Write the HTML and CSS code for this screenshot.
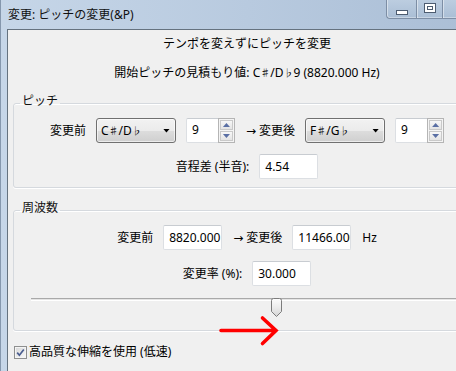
FILE: index.html
```html
<!DOCTYPE html>
<html lang="ja">
<head>
  <meta charset="utf-8">
  <link rel="stylesheet" href="styles.css">
</head>
<body>
  <div class="window">
    <div class="titlebar">
      <span class="title">変更: ピッチの変更(&amp;P)</span>
      <div class="caption">
        <span class="cap-btn cap-min"><span class="min-icon"></span></span>
        <span class="cap-btn cap-max"><span class="max-icon"></span></span>
        <span class="cap-btn cap-close"></span>
      </div>
    </div>

    <div class="client">
      <p class="info first">テンポを変えずにピッチを変更</p>
      <p class="info second">開始ピッチの見積もり値: C<span class="acc">♯</span>/D<span class="acc">♭</span>9 (8820.000 Hz)</p>

      <fieldset class="group">
        <legend>ピッチ</legend>
        <div class="row">
          <span class="lbl">変更前</span>
          <div class="combo"><span>C<span class="acc">♯</span>/D<span class="acc">♭</span></span><span class="caret"></span></div>
          <div class="spin">
            <span class="spin-val">9</span>
            <span class="spin-btns"><span class="sb up"></span><span class="sb down"></span></span>
          </div>
          <span class="lbl to">→ 変更後</span>
          <div class="combo"><span>F<span class="acc">♯</span>/G<span class="acc">♭</span></span><span class="caret"></span></div>
          <div class="spin">
            <span class="spin-val">9</span>
            <span class="spin-btns"><span class="sb up"></span><span class="sb down"></span></span>
          </div>
        </div>
        <div class="row">
          <span class="lbl">音程差 (半音):</span>
          <input class="field" type="text" value="4.54">
        </div>
      </fieldset>

      <fieldset class="group freq">
        <legend>周波数</legend>
        <div class="row">
          <span class="lbl">変更前</span>
          <input class="field" type="text" value="8820.000">
          <span class="lbl to">→ 変更後</span>
          <input class="field" type="text" value="11466.000">
          <span class="lbl hz">Hz</span>
        </div>
        <div class="row">
          <span class="lbl">変更率 (%):</span>
          <input class="field" type="text" value="30.000">
        </div>
        <div class="slider">
          <div class="track"></div>
          <svg class="thumb" width="11" height="19" viewBox="0 0 11 19">
            <defs>
              <linearGradient id="tg" x1="0" y1="0" x2="0" y2="1">
                <stop offset="0" stop-color="#fdfdfd"/>
                <stop offset="0.5" stop-color="#ececec"/>
                <stop offset="1" stop-color="#d4d4d4"/>
              </linearGradient>
            </defs>
            <path d="M0.5 2.5 Q0.5 0.5 2.5 0.5 H8.5 Q10.5 0.5 10.5 2.5 V13.5 L5.5 18.5 L0.5 13.5 Z" fill="url(#tg)" stroke="#7c7c7c"/>
          </svg>
        </div>
      </fieldset>

      <label class="check">
        <svg class="box" width="13" height="13" viewBox="0 0 13 13">
          <defs>
            <linearGradient id="cg" x1="0" y1="0" x2="1" y2="1">
              <stop offset="0" stop-color="#d9dadb"/>
              <stop offset="1" stop-color="#f6f6f6"/>
            </linearGradient>
          </defs>
          <rect x="0.5" y="0.5" width="12" height="12" fill="#f4f4f4" stroke="#8e8f8f"/>
          <rect x="2" y="2" width="9" height="9" fill="url(#cg)"/>
          <path d="M3.2 6.6 L5.4 9.2 L9.8 3.4" fill="none" stroke="#4a5d8f" stroke-width="1.7"/>
        </svg>
        <span>高品質な伸縮を使用 (低速)</span>
      </label>
    </div>
  </div>

  <svg class="red-arrow" width="456" height="371" viewBox="0 0 456 371">
    <path d="M221 330.5 H275 M262.5 318 L276 330.5 L262.5 343.5" fill="none" stroke="#ff0000" stroke-width="3.6" stroke-linecap="round" stroke-linejoin="miter"/>
  </svg>
</body>
</html>
```

FILE: styles.css
```css
* {
  box-sizing: border-box;
}
body {
  margin: 0;
  width: 456px;
  height: 371px;
  overflow: hidden;
  position: relative;
  font-family: "Noto Sans", "DejaVu Sans", "Noto Sans CJK JP", sans-serif;
  font-size: 12px;
  color: #000;
  background: #f0f0f0;
}
.acc {
  font-family: "Noto Sans CJK JP", sans-serif;
  font-size: 10px;
}
.window {
  width: 495px;
  height: 371px;
  display: flex;
  flex-direction: column;
  background: linear-gradient(to right, #c6d6e8 0%, #b8cadf 50%, #a9bdd5 100%);
  border-left: 1px solid #8597ad;
  padding: 0 8px 0 6px;
}
.titlebar {
  height: 29px;
  display: flex;
  align-items: flex-start;
}
.title {
  line-height: 16px;
  padding: 7px 0 0 1px;
  color: #111;
}
.caption {
  margin-left: auto;
  display: flex;
}
.cap-btn {
  height: 19px;
  display: flex;
  align-items: center;
  justify-content: center;
  border-left: 1px solid #7d8ea5;
  border-bottom: 1px solid #7d8ea5;
  background: linear-gradient(#bccde0, #aabed5);
  box-shadow: inset 1px 0 rgba(255, 255, 255, 0.45), inset 0 -1px rgba(255, 255, 255, 0.35);
}
.cap-min {
  width: 30px;
  border-bottom-left-radius: 4px;
}
.cap-max {
  width: 26px;
}
.cap-close {
  width: 45px;
  border-right: 1px solid #7d8ea5;
}
.min-icon {
  width: 12px;
  height: 5px;
  margin-top: 6px;
  background: #fff;
  border: 1px solid #4d5c70;
}
.max-icon {
  width: 12px;
  height: 10px;
  margin-top: -2px;
  border: 1px solid #4d5c70;
  background: #fff;
  box-shadow: inset 0 0 0 2px #fff, inset 0 0 0 3px #4d5c70;
}
.client {
  flex: 1;
  background: #f0f0f0;
  border-top: 1px solid #65727f;
  border-left: 1px solid #65727f;
  border-right: 1px solid #65727f;
}
.info {
  margin: 0;
  text-align: center;
  line-height: 16px;
}
.info.first {
  margin-top: 6px;
}
.info.second {
  margin-top: 13px;
}
.group {
  margin: 12px 5px 0;
  padding: 5px 6px 8px;
  border: 1px solid #d5d9de;
  border-radius: 3px;
  box-shadow: 0 1px #fff, inset 0 1px #fff;
}
.group legend {
  padding: 0 2px 4px;
  margin-left: 0;
  line-height: 16px;
  color: #111;
}
.group.freq {
  padding-bottom: 13px;
}
.row {
  height: 25px;
  display: flex;
  align-items: center;
  justify-content: center;
  gap: 10px;
}
.row + .row {
  margin-top: 11px;
}
.lbl {
  line-height: 16px;
  white-space: nowrap;
}
.lbl.to {
  margin-left: 1px;
}
.lbl.hz {
  margin-left: 1px;
}
.combo {
  width: 80px;
  height: 25px;
  display: flex;
  align-items: center;
  padding-left: 4px;
  border: 1px solid #707070;
  border-radius: 3px;
  background: linear-gradient(#f2f2f2 0%, #ebebeb 50%, #dddddd 51%, #cfcfcf 100%);
  box-shadow: inset 0 0 0 1px rgba(255, 255, 255, 0.6);
}
.caret {
  width: 7px;
  height: 4px;
  margin-left: auto;
  margin-right: 5px;
  background: #000;
  clip-path: polygon(0 0, 100% 0, 50% 100%);
}
.spin {
  width: 49px;
  height: 25px;
  display: flex;
  background: #fff;
  border: 1px solid #dcdfe3;
  border-top-color: #c8ccd1;
  border-radius: 2px;
}
.spin-val {
  flex: 1;
  padding-left: 5px;
  line-height: 22px;
}
.spin-btns {
  width: 17px;
  display: flex;
  flex-direction: column;
  gap: 1px;
  padding: 1px;
  border: 1px solid #b5b5b5;
  margin: -1px -1px -1px 0;
  background: #f4f4f4;
}
.sb {
  flex: 1;
  display: flex;
  align-items: center;
  justify-content: center;
  border: 1px solid #c9c9c9;
  background: linear-gradient(#f7f7f7, #e4e4e4);
}
.sb::after {
  content: "";
  width: 7px;
  height: 4px;
  background: #5a6fa4;
}
.sb.up::after {
  clip-path: polygon(50% 0, 100% 100%, 0 100%);
}
.sb.down::after {
  clip-path: polygon(0 0, 100% 0, 50% 100%);
}
.field {
  width: 59px;
  height: 25px;
  margin: 0;
  padding: 0 0 0 5px;
  font: inherit;
  color: #000;
  background: #fff;
  border: 1px solid #dcdfe3;
  border-top-color: #c8ccd1;
  border-radius: 2px;
  outline: none;
}
.slider {
  position: relative;
  height: 19px;
  margin: 12px 11px 0;
}
.track {
  height: 3px;
  margin-top: 7px;
  border-top: 1px solid #a9a9a9;
  background: #e4e4e4;
  border-bottom: 1px solid #fff;
}
.thumb {
  position: absolute;
  top: 0;
  left: 240px;
  display: block;
}
.check {
  display: flex;
  align-items: center;
  gap: 2px;
  margin: 13px 0 0 6px;
  line-height: 16px;
}
.check .box {
  display: block;
}
.red-arrow {
  position: absolute;
  left: 0;
  top: 0;
  pointer-events: none;
}
```
